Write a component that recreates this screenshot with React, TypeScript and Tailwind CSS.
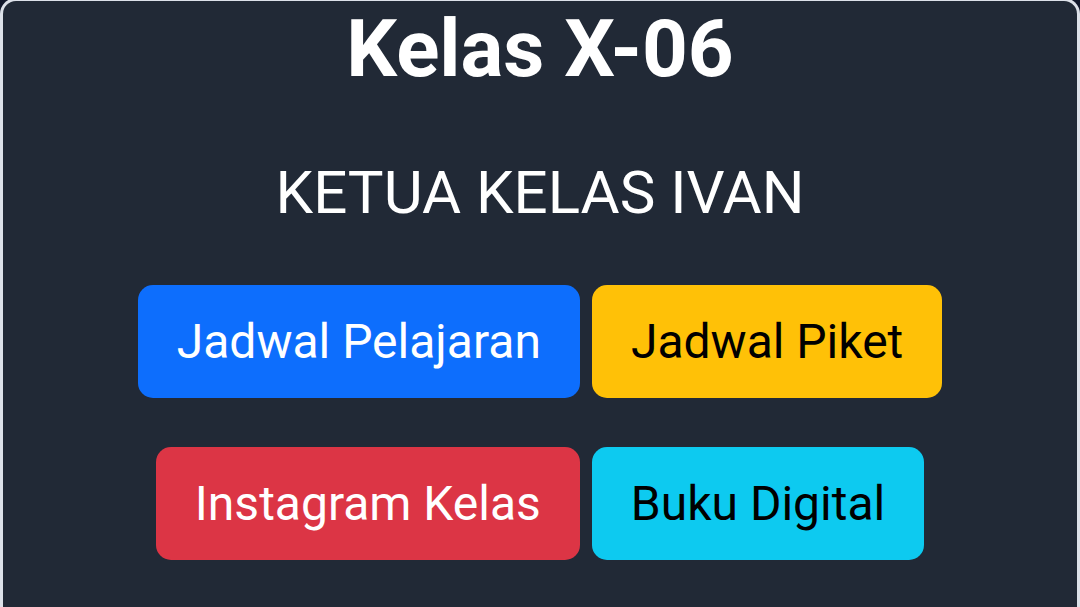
const buttons = [
  [
    { label: "Jadwal Pelajaran", className: "bg-[#0d6efd] text-white" },
    { label: "Jadwal Piket", className: "bg-[#ffc107] text-black" },
  ],
  [
    { label: "Instagram Kelas", className: "bg-[#dc3545] text-white" },
    { label: "Buku Digital", className: "bg-[#0dcaf0] text-black" },
  ],
];

const App = () => {
  return (
    <div className="h-[607px] w-[1080px] overflow-hidden bg-[#12182b] font-['Roboto',sans-serif]">
      <div className="-mt-[2px] min-h-[620px] rounded-t-[16px] border-[3px] border-b-0 border-[#dde1e9] bg-[#212936]">
        <div className="flex flex-col items-center pt-[8px]">
          <h1 className="text-[80px] font-bold leading-none text-white">
            Kelas X-06
          </h1>
          <p className="mt-[74px] text-[60px] leading-none text-white">
            KETUA KELAS IVAN
          </p>

          <div className="mt-[62px] flex flex-col gap-[49px]">
            {buttons.map((row, i) => (
              <div key={i} className="flex justify-center gap-[12px]">
                {row.map((btn) => (
                  <a
                    key={btn.label}
                    href="#"
                    className={`flex h-[113px] items-center rounded-[15px] px-[39px] text-[48px] leading-none ${btn.className}`}
                  >
                    {btn.label}
                  </a>
                ))}
              </div>
            ))}
          </div>
        </div>
      </div>
    </div>
  );
};

export default App;
